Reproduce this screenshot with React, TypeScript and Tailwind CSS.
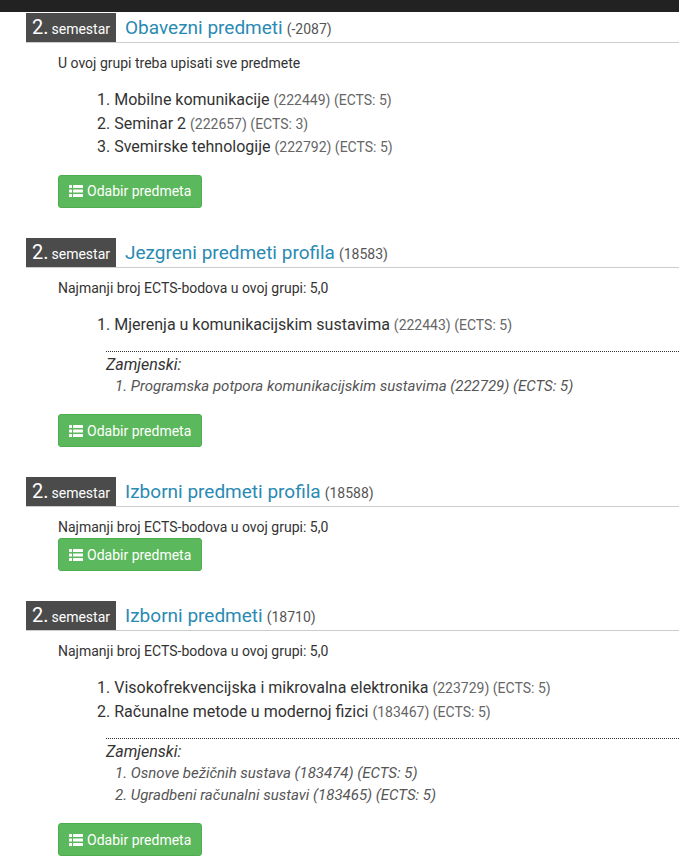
import React from 'react';

type Course = { name: string; code: string; ects: number };
type Group = {
  title: string;
  id: string;
  note: string;
  courses: Course[];
  alternates?: Course[];
};

const groups: Group[] = [
  {
    title: 'Obavezni predmeti',
    id: '-2087',
    note: 'U ovoj grupi treba upisati sve predmete',
    courses: [
      { name: 'Mobilne komunikacije', code: '222449', ects: 5 },
      { name: 'Seminar 2', code: '222657', ects: 3 },
      { name: 'Svemirske tehnologije', code: '222792', ects: 5 },
    ],
  },
  {
    title: 'Jezgreni predmeti profila',
    id: '18583',
    note: 'Najmanji broj ECTS-bodova u ovoj grupi: 5,0',
    courses: [{ name: 'Mjerenja u komunikacijskim sustavima', code: '222443', ects: 5 }],
    alternates: [{ name: 'Programska potpora komunikacijskim sustavima', code: '222729', ects: 5 }],
  },
  {
    title: 'Izborni predmeti profila',
    id: '18588',
    note: 'Najmanji broj ECTS-bodova u ovoj grupi: 5,0',
    courses: [],
  },
  {
    title: 'Izborni predmeti',
    id: '18710',
    note: 'Najmanji broj ECTS-bodova u ovoj grupi: 5,0',
    courses: [
      { name: 'Visokofrekvencijska i mikrovalna elektronika', code: '223729', ects: 5 },
      { name: 'Računalne metode u modernoj fizici', code: '183467', ects: 5 },
    ],
    alternates: [
      { name: 'Osnove bežičnih sustava', code: '183474', ects: 5 },
      { name: 'Ugradbeni računalni sustavi', code: '183465', ects: 5 },
    ],
  },
];

function ListIcon() {
  return (
    <svg width="14" height="12" viewBox="0 0 14 12" fill="currentColor" aria-hidden>
      <rect x="0" y="0" width="3" height="3" rx="0.5" />
      <rect x="0" y="4.5" width="3" height="3" rx="0.5" />
      <rect x="0" y="9" width="3" height="3" rx="0.5" />
      <rect x="4" y="0" width="10" height="3" rx="0.5" />
      <rect x="4" y="4.5" width="10" height="3" rx="0.5" />
      <rect x="4" y="9" width="10" height="3" rx="0.5" />
    </svg>
  );
}

const btnBase =
  'flex items-center gap-[4px] h-[33px] px-[10px] rounded-[3px] bg-[#5cb85c] border border-[#4cae4c] text-white text-[14px] leading-none';

function GroupSection({ group }: { group: Group }) {
  let btnClass = 'mt-[2px] ' + btnBase;
  if (group.alternates) btnClass = 'mt-[17px] ' + btnBase;
  else if (group.courses.length > 0) btnClass = 'mt-[16px] ' + btnBase;

  return (
    <section className="mb-[30px]">
      {/** Header */}
      <div className="flex items-end h-[30px] border-b border-[#cccccc]">
        <div className="flex items-baseline h-[29px] bg-[#4b4b4b] text-white px-[6px] pt-[3px]">
          <span className="text-[20px] leading-[23px]">2.</span>
          <span className="text-[14px] leading-[23px] ml-[3px]">semestar</span>
        </div>
        <h3 className="ml-[9px] h-[29px] pt-[3px] text-[19px] leading-[23px] text-[#2a8ab3]">
          {group.title}
          <span className="ml-[4px] text-[14px] leading-none text-[#555]">({group.id})</span>
        </h3>
      </div>
      <div className="pl-[32px]">
        <p className="mt-[11px] text-[14px] leading-[18px] text-[#333]">{group.note}</p>
        {group.courses.length > 0 && (
          <ol className="mt-[16px] pl-[39px] text-[16px] leading-[23.5px] text-[#333]">
            {group.courses.map((c, i) => (
              <li key={c.code} className="h-[23.5px]">
                {i + 1}. {c.name}{' '}
                <span className="text-[14px] leading-none text-[#666]">
                  ({c.code}) (ECTS: {c.ects})
                </span>
              </li>
            ))}
          </ol>
        )}
        {group.alternates && (
          <div className="mt-[15px] ml-[48px] border-t border-dotted border-[#333] pt-[2px]">
            <div className="text-[16px] italic leading-[21px] text-[#333]">Zamjenski:</div>
            <ol className="pl-[9px] text-[15px] italic leading-[22px] text-[#555]">
              {group.alternates.map((c, i) => (
                <li key={c.code}>
                  {i + 1}. {c.name} ({c.code}) (ECTS: {c.ects})
                </li>
              ))}
            </ol>
          </div>
        )}
        <button className={btnClass}>
          <ListIcon />
          <span>Odabir predmeta</span>
        </button>
      </div>
    </section>
  );
}

export default function App() {
  return (
    <div className="min-h-screen bg-white font-['Roboto',sans-serif]">
      <div className="h-[12px] bg-[#222]" />
      <div className="pl-[26px] pt-[1px]">
        {groups.map((g) => (
          <GroupSection key={g.id} group={g} />
        ))}
      </div>
    </div>
  );
}
